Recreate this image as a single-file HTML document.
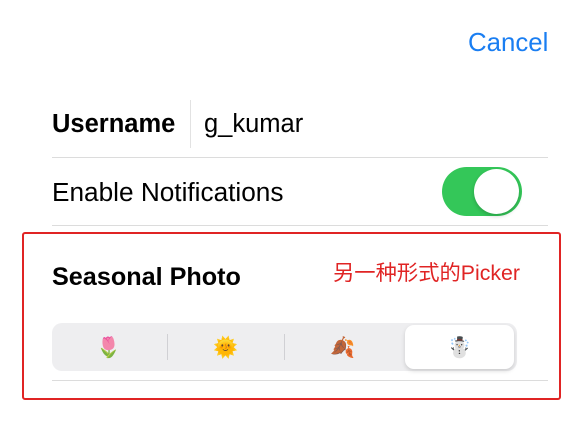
<!DOCTYPE html>
<html><head><style>
body{margin:0;width:573px;height:425px;background:#fff;font-family:"Liberation Sans","Noto Sans CJK SC",sans-serif;position:relative;overflow:hidden;color:#000}
.a{position:absolute;white-space:nowrap}
.line{position:absolute;left:52px;width:496px;height:1px;background:#dcdcdc}
</style></head><body>
<div class="a" style="left:468px;top:29px;font-size:25.8px;color:#1a7ef2">Cancel</div>
<div class="a" style="left:52px;top:110px;font-size:25.5px;font-weight:bold">Username</div>
<div class="a" style="left:190px;top:100px;width:1px;height:48px;background:#e2e2e2"></div>
<div class="a" style="left:204px;top:110px;font-size:25.5px">g_kumar</div>
<div class="line" style="top:157px"></div>
<div class="a" style="left:52px;top:177px;font-size:26.2px">Enable Notifications</div>
<div class="a" style="left:442px;top:167px;width:80px;height:49px;border-radius:25px;background:#34c759"></div>
<div class="a" style="left:474px;top:169px;width:45px;height:45px;border-radius:50%;background:#fff;box-shadow:0 2px 4px rgba(0,0,0,.2)"></div>
<div class="line" style="top:225px"></div>
<div class="a" style="left:22px;top:232px;width:535px;height:164px;border:2.5px solid #e02424;border-radius:3px"></div>
<div class="a" style="left:52px;top:263px;font-size:25.2px;font-weight:bold">Seasonal Photo</div>
<div class="a" style="left:333px;top:256px;font-size:21.3px;color:#e02424">另一种形式的Picker</div>
<div class="a" style="left:52px;top:323px;width:465px;height:48px;border-radius:10px;background:#eeeef0"></div>
<div class="a" style="left:167px;top:334px;width:1px;height:26px;background:#d0d0d4"></div>
<div class="a" style="left:284px;top:334px;width:1px;height:26px;background:#d0d0d4"></div>
<div class="a" style="left:405px;top:325px;width:109px;height:44px;border-radius:9px;background:#fff;box-shadow:0 2px 4px rgba(0,0,0,.15)"></div>
<div class="a" style="left:96px;top:335px;font-size:20px">🌷</div>
<div class="a" style="left:213px;top:335px;font-size:20px">🌞</div>
<div class="a" style="left:330px;top:335px;font-size:20px">🍂</div>
<div class="a" style="left:447px;top:335px;font-size:20px">☃️</div>
<div class="line" style="top:380px"></div>
</body></html>
